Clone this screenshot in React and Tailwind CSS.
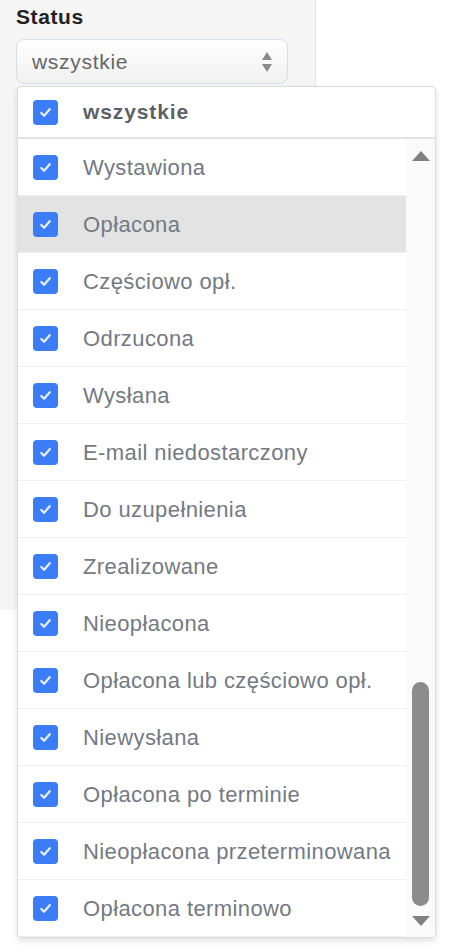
const statuses = [
  "Wystawiona",
  "Opłacona",
  "Częściowo opł.",
  "Odrzucona",
  "Wysłana",
  "E-mail niedostarczony",
  "Do uzupełnienia",
  "Zrealizowane",
  "Nieopłacona",
  "Opłacona lub częściowo opł.",
  "Niewysłana",
  "Opłacona po terminie",
  "Nieopłacona przeterminowana",
  "Opłacona terminowo",
];

function CheckBox() {
  return (
    <span className="flex h-[25px] w-[25px] shrink-0 items-center justify-center rounded-[4px] bg-[#3b7cf7]">
      <svg viewBox="0 0 16 16" className="h-[15px] w-[15px]" fill="none">
        <path d="M3.5 8.5 L6.5 11.5 L12.5 4.5" stroke="#e8efff" strokeWidth="2.4" strokeLinecap="round" strokeLinejoin="round" />
      </svg>
    </span>
  );
}

function Row({ label, hover }) {
  return (
    <div
      className={`flex h-[57px] items-center gap-[25px] border-b border-[#efefef] pl-[15px] ${
        hover ? "bg-[#e3e3e3]" : "bg-white"
      }`}
    >
      <CheckBox />
      <span className="whitespace-nowrap text-[22px] tracking-[0.4px] text-[#737a83]">{label}</span>
    </div>
  );
}

export default function App() {
  return (
    <div
      className="relative h-[952px] w-[457px] overflow-hidden bg-white"
      style={{ fontFamily: '"Liberation Sans", Arial, sans-serif' }}
    >
      <div className="h-[610px] w-[316px] border-r border-[#dfe5ec] bg-[#f5f5f5] px-[16px] pt-[2px]">
        <div className="text-[21px] font-bold leading-[30px] tracking-[0.6px] text-[#222]">Status</div>
        <div className="mt-[7px] flex h-[45px] w-[272px] items-center justify-between rounded-[8px] border border-[#d3deea] bg-gradient-to-b from-white to-[#f0f0f0] pl-[15px] pr-[14px]">
          <span className="text-[21px] tracking-[0.7px] text-[#666]">wszystkie</span>
          <svg viewBox="0 0 12 22" className="h-[22px] w-[12px]">
            <path d="M6 1 L11 9 L1 9 Z" fill="#8a8a8a" />
            <path d="M6 21 L11 13 L1 13 Z" fill="#8a8a8a" />
          </svg>
        </div>
      </div>

      <div className="absolute left-[17px] top-[86px] w-[419px] rounded-[4px] border border-[#dcdcdc] bg-white shadow-[0_3px_6px_rgba(0,0,0,0.12)]">
        <div className="flex h-[52px] items-center gap-[25px] border-b-2 border-[#e2e2e2] pl-[15px]">
          <CheckBox />
          <span className="text-[21px] font-bold tracking-[0.9px] text-[#5c6168]">wszystkie</span>
        </div>
        <div className="flex">
          <div className="flex-1">
            {statuses.map((s) => (
              <Row key={s} label={s} hover={s === "Opłacona"} />
            ))}
          </div>
          <div className="flex w-[29px] flex-col items-center bg-[#fafafa]">
            <svg viewBox="0 0 20 12" className="mt-[11px] h-[12px] w-[20px]">
              <path d="M10 1 L19 11 L1 11 Z" fill="#808080" strokeLinejoin="round" />
            </svg>
            <div className="mt-[520px] h-[224px] w-[17px] rounded-full bg-[#8c8c8c]" />
            <svg viewBox="0 0 20 12" className="mt-[9px] h-[12px] w-[20px]">
              <path d="M1 1 L19 1 L10 11 Z" fill="#808080" />
            </svg>
          </div>
        </div>
      </div>
    </div>
  );
}
